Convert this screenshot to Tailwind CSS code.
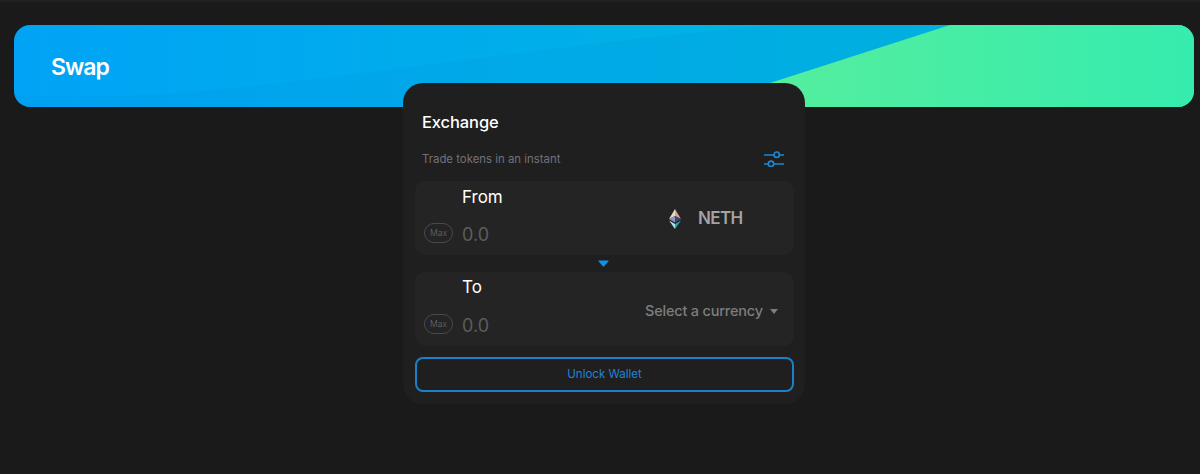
<!DOCTYPE html>
<html lang="en">
<head>
    <meta charset="UTF-8">
    <title>Swap</title>
    <script src="https://cdn.jsdelivr.net/npm/@tailwindcss/browser@4"></script>
</head>
<body class="bg-[#1a1a1a] h-[474px] overflow-hidden font-['Inter',sans-serif] border-t-2 border-[#222222]">

    <!-- Banner -->
    <div class="relative ml-[14px] mr-[6px] mt-[23px] h-[82px] rounded-[16px] overflow-hidden bg-gradient-to-r from-[#02a3f6] to-[#05bcd8]">
        <svg class="absolute inset-0" width="1180" height="82" viewBox="0 0 1180 82">
            <defs>
                <linearGradient id="green" x1="0" y1="0" x2="1" y2="0">
                    <stop offset="0" stop-color="#56ee9d"/>
                    <stop offset="1" stop-color="#35ecae"/>
                </linearGradient>
            </defs>
            <path d="M0 70 C200 82 420 30 760 0 L1180 0 L1180 82 L0 82 Z" fill="#0296e0" fill-opacity="0.2"/>
            <path d="M936 0 L1180 0 L1180 82 L740 82 L756 58 Z" fill="url(#green)"/>
        </svg>
        <h1 class="relative pl-[37px] pt-[27px] text-[23px] leading-[30px] font-semibold tracking-[-1px] text-white">Swap</h1>
    </div>

    <!-- Card -->
    <div class="relative w-[402px] h-[321px] ml-[403px] -mt-[24px] rounded-[20px] bg-[#1f1f1f] pl-[12px] pr-[11px]">
        <h2 class="pl-[7px] pt-[28px] text-[16.5px] leading-[22px] font-medium tracking-[-0.1px] text-white">Exchange</h2>

        <div class="flex items-center justify-between pl-[7px] pr-[10px] mt-[15px] h-[24px]">
            <span class="text-[11.4px] text-[#73717c]">Trade tokens in an instant</span>
            <svg class="-mt-[2px]" width="20" height="16" viewBox="0 0 20 16" fill="none" stroke="#1d88d0" stroke-width="1.7">
                <path d="M0 4H10M15.5 4H20M0 13H4.5M10 13H20"/>
                <circle cx="12.7" cy="3.7" r="2.7"/>
                <circle cx="7" cy="12.8" r="2.7"/>
            </svg>
        </div>

        <!-- From -->
        <div class="mt-[9px] h-[74px] rounded-[10px] bg-[#242424] flex">
            <div class="w-[47px] flex items-end pb-[12px] pl-[9px]">
                <span class="w-[29px] h-[20px] flex items-center justify-center rounded-full border border-[#4a4a4a] text-[8.5px] font-light text-[#6a6a6a]">Max</span>
            </div>
            <div class="w-[190px] pt-[5px]">
                <div class="text-[17px] leading-[22px] text-white">From</div>
                <div class="mt-[15px] text-[18px] leading-[24px] text-[#5c5c5c]">0.0</div>
            </div>
            <div class="flex-1 flex items-center pl-[17px] pt-[1px] gap-[17px]">
                <svg width="12" height="20" viewBox="0 0 12 20">
                    <path d="M6 0L0 10L6 7Z" fill="#e9d9c8"/>
                    <path d="M6 0L12 10L6 7Z" fill="#d9a58a"/>
                    <path d="M0 10L6 13.5L6 7Z" fill="#8f93c9"/>
                    <path d="M12 10L6 13.5L6 7Z" fill="#3c4a6b"/>
                    <path d="M0 11.5L6 20L6 15Z" fill="#a8e3e0"/>
                    <path d="M12 11.5L6 20L6 15Z" fill="#2f9fc4"/>
                </svg>
                <span class="text-[17px] font-semibold tracking-[-0.6px] text-[#a3a3a3]">NETH</span>
            </div>
        </div>

        <!-- Arrow -->
        <div class="h-[17px] flex items-center justify-center -translate-x-[1px]">
            <svg width="11" height="7" viewBox="0 0 11 7"><path d="M1 0.5H10Q11 0.5 10.3 1.4L6.2 6.2Q5.5 6.9 4.8 6.2L0.7 1.4Q0 0.5 1 0.5Z" fill="#0f93ea"/></svg>
        </div>

        <!-- To -->
        <div class="h-[74px] rounded-[10px] bg-[#242424] flex">
            <div class="w-[47px] flex items-end pb-[12px] pl-[9px]">
                <span class="w-[29px] h-[20px] flex items-center justify-center rounded-full border border-[#4a4a4a] text-[8.5px] font-light text-[#6a6a6a]">Max</span>
            </div>
            <div class="w-[183px] pt-[4px]">
                <div class="text-[17px] leading-[22px] text-white">To</div>
                <div class="mt-[16px] text-[18px] leading-[24px] text-[#5c5c5c]">0.0</div>
            </div>
            <div class="flex-1 flex items-center gap-[7px] pt-[4px]">
                <span class="text-[14.5px] font-medium tracking-[-0.2px] text-[#7d7d7d]">Select a currency</span>
                <svg width="8" height="5" viewBox="0 0 8 5"><path d="M0 0H8L4 5Z" fill="#7d7d7d"/></svg>
            </div>
        </div>

        <!-- Button -->
        <button class="mt-[11px] w-[379px] h-[35px] pt-[1px] rounded-[8px] border-2 border-[#1a81c4] text-[11.5px] font-normal text-[#1d84d8]">Unlock Wallet</button>
    </div>

</body>
</html>
